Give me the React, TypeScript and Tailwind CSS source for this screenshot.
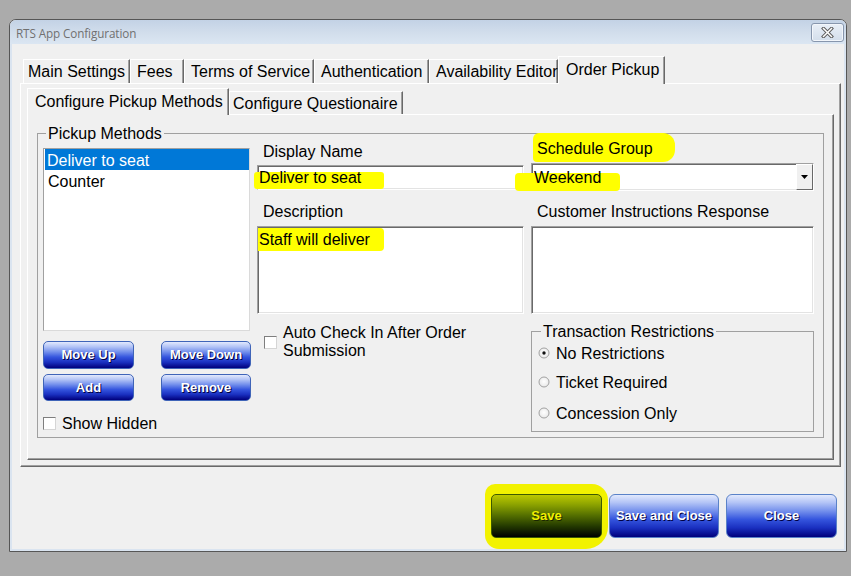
import React from "react";

const blueBtn =
  "flex items-center justify-center rounded-[5px] border border-[#3f64b8] bg-[linear-gradient(to_bottom,#e2e9fd_0%,#b3c4f6_18%,#7490ec_38%,#3555de_58%,#1a30c0_78%,#00007c_100%)] text-white font-bold text-[13px] [text-shadow:1px_1px_0_#000040]";

const sunken =
  "border border-t-[#a0a0a0] border-l-[#a0a0a0] border-r-[#ffffff] border-b-[#ffffff] shadow-[inset_1px_1px_0_#696969,inset_-1px_-1px_0_#e3e3e3] bg-white";

function Radio({ on }: { on?: boolean }) {
  return (
    <svg width="12" height="12" viewBox="0 0 12 12" className="shrink-0">
      <defs>
        <radialGradient id="rg" cx="50%" cy="45%" r="60%">
          <stop offset="0%" stopColor="#ffffff" />
          <stop offset="100%" stopColor="#e6e6e6" />
        </radialGradient>
      </defs>
      <circle cx="6" cy="6" r="5" fill="url(#rg)" stroke="#a2a2a2" strokeWidth="1" />
      {on && <circle cx="6" cy="6" r="1.7" fill="#111" />}
    </svg>
  );
}

function Check() {
  return (
    <div className="w-[13px] h-[13px] shrink-0 bg-white border border-[#7e7e7e] border-r-[#d5d5d5] border-b-[#d5d5d5]" />
  );
}

export default function App() {
  const outerTab =
    "h-[24px] shrink-0 border-t border-l border-white border-r border-r-[#696969] shadow-[inset_-1px_0_0_#a0a0a0] text-[16px] leading-[22px] pt-[1px] whitespace-nowrap";
  const label = "h-[18px] pl-[6px] pt-[1px] text-[16px] leading-[18px]";
  return (
    <div className="w-[851px] h-[576px] bg-[#ababab] pt-[19px] pl-[9px] font-['Liberation_Sans',Arial,sans-serif] text-black overflow-hidden">
      <div className="w-[838px] h-[533px] border border-[#565656] rounded-t-[7px] flex flex-col overflow-hidden bg-[#f0f0f0]">
        {/* Title bar */}
        <div className="h-[24px] shrink-0 flex items-start justify-between pl-[6px] pr-[2px] bg-[linear-gradient(to_bottom,#c3d2e5,#d2deec_55%,#dbe6f2)]">
          <span className="mt-[6px] text-[11.7px] leading-[14px] text-[#707070] font-['Open_Sans',sans-serif] tracking-[-0.1px]">
            RTS App Configuration
          </span>
          <div className="mt-[3px] w-[33px] h-[19px] rounded-[3px] border border-[#8796ad] bg-[linear-gradient(to_bottom,#e9eff7,#d3deeb)] flex items-center justify-center shadow-[inset_0_0_0_1px_#f2f6fb]">
            <svg width="13" height="11" viewBox="0 0 13 11">
              <path d="M2.5 1.5 L10.5 9.5 M10.5 1.5 L2.5 9.5" stroke="#5a5a5a" strokeWidth="3.4" strokeLinecap="square" />
              <path d="M2.5 1.5 L10.5 9.5 M10.5 1.5 L2.5 9.5" stroke="#ffffff" strokeWidth="1.5" strokeLinecap="square" />
            </svg>
          </div>
        </div>

        {/* Body */}
        <div className="flex-1 border-x-2 border-b-2 border-[#dae4f0] flex flex-col">
          {/* Outer tab control */}
          <div className="mt-[12px] ml-[8px] w-[821px] flex flex-col">
            <div className="h-[27px] flex items-end pl-[3px]">
              <div className={`${outerTab} w-[107px] pl-[4px]`}>Main Settings</div>
              <div className={`${outerTab} w-[54px] pl-[6px]`}>Fees</div>
              <div className={`${outerTab} w-[130px] pl-[6px]`}>Terms of Service</div>
              <div className={`${outerTab} w-[115px] pl-[6px]`}>Authentication</div>
              <div className={`${outerTab} w-[129px] pl-[6px]`}>Availability Editor</div>
              <div className="relative z-10 -mb-[1px] h-[28px] w-[107px] shrink-0 bg-[#f0f0f0] border-t border-l border-white border-r border-r-[#696969] shadow-[inset_-1px_0_0_#a0a0a0] pl-[7px] pt-[1px] text-[16px] leading-[24px] whitespace-nowrap">
                Order Pickup
              </div>
            </div>
            <div className="h-[384px] border-t border-l border-white border-r border-b border-r-[#696969] border-b-[#696969] shadow-[inset_-1px_-1px_0_#a0a0a0] pl-[6px] pt-[4px]">
              {/* Inner tab control */}
              <div className="w-[807px] flex flex-col">
                <div className="h-[26px] flex items-end">
                  <div className="relative z-10 -mb-[1px] h-[27px] w-[202px] shrink-0 bg-[#f0f0f0] border-t border-l border-white border-r border-r-[#696969] shadow-[inset_-1px_0_0_#a0a0a0] pl-[7px] pt-[1px] text-[16px] leading-[24px] whitespace-nowrap">
                    Configure Pickup Methods
                  </div>
                  <div className="h-[23px] w-[174px] shrink-0 border-t border-l border-white border-r border-r-[#696969] shadow-[inset_-1px_0_0_#a0a0a0] pl-[3px] pt-[1px] text-[16px] leading-[22px] whitespace-nowrap">
                    Configure Questionaire
                  </div>
                </div>
                <div className="h-[346px] border-t border-l border-white border-r border-b border-r-[#696969] border-b-[#696969] shadow-[inset_-1px_-1px_0_#a0a0a0] pl-[9px] pt-[9px]">
                  <fieldset className="w-[787px] h-[314px] border border-[#a0a0a0]">
                    <legend className="ml-[8px] px-[2px] text-[16px] leading-[18px]">
                      <span className="relative top-[1px]">Pickup Methods</span>
                    </legend>
                    <div className="flex items-start pl-[5px]">
                      {/* Left column */}
                      <div className="w-[208px] flex flex-col">
                        <div className="mt-[6px] w-[207px] h-[183px] bg-white border border-[#a0a0a0] border-r-[#dadada] border-b-[#dadada] pl-[1px] text-[16px]">
                          <div className="h-[21px] leading-[21px] pt-[1px] bg-[#0078d7] text-white pl-[2px]">Deliver to seat</div>
                          <div className="h-[21px] leading-[21px] pt-[1px] pl-[3px]">Counter</div>
                        </div>
                        <div className="mt-[10px] h-[28px] flex justify-between">
                          <div className={`${blueBtn} w-[91px]`}>Move Up</div>
                          <div className={`${blueBtn} w-[90px]`}>Move Down</div>
                        </div>
                        <div className="mt-[5px] h-[27px] flex justify-between">
                          <div className={`${blueBtn} w-[91px]`}>Add</div>
                          <div className={`${blueBtn} w-[90px]`}>Remove</div>
                        </div>
                        <div className="mt-[13px] h-[18px] flex items-center gap-[6px] text-[16px] leading-[18px]">
                          <Check />
                          <span className="relative top-[1px]">Show Hidden</span>
                        </div>
                      </div>

                      {/* Column A */}
                      <div className="ml-[6px] w-[267px] flex flex-col">
                        <div className={label}>Display Name</div>
                        <div className={`mt-[5px] h-[25px] relative ${sunken}`}>
                          <div className="absolute left-[-4px] top-[6px] w-[130px] h-[17px] bg-[#ffff00] rounded-[3px]" />
                          <span className="relative pl-[1px] text-[16px] leading-[21px]">Deliver to seat</span>
                        </div>
                        <div className={`mt-[12px] ${label}`}>Description</div>
                        <div className={`mt-[6px] h-[88px] relative ${sunken}`}>
                          <div className="absolute left-[0px] top-[1px] w-[126px] h-[23px] bg-[#ffff00] rounded-r-[4px]" />
                          <div className="relative pl-[1px] pt-[3px] text-[16px] leading-[20px]">Staff will deliver</div>
                        </div>
                        <div className="mt-[9px] flex items-start">
                          <div className="ml-[7px] mt-[13px]">
                            <Check />
                          </div>
                          <div className="ml-[6px] pt-[1px] text-[16px] leading-[18px]">
                            Auto Check In After Order
                            <br />
                            Submission
                          </div>
                        </div>
                      </div>

                      {/* Column B */}
                      <div className="ml-[7px] -mt-[3px] w-[283px] flex flex-col">
                        <div className={`relative ${label}`}>
                          <div className="absolute left-[2px] top-[-6px] w-[142px] h-[29px] bg-[#ffff00] rounded-[6px_12px_12px_4px]" />
                          <span className="relative">Schedule Group</span>
                        </div>
                        <div className={`mt-[6px] h-[28px] relative flex ${sunken}`}>
                          <div className="absolute left-[-17px] top-[9px] w-[105px] h-[18px] bg-[#ffff00] rounded-[4px]" />
                          <span className="relative flex-1 pl-[2px] text-[16px] leading-[27px]">Weekend</span>
                          <div className="w-[17px] h-full border border-t-white border-l-white border-r-[#696969] border-b-[#696969] bg-[#f0f0f0] flex items-center justify-center">
                            <svg width="7" height="4" viewBox="0 0 7 4">
                              <path d="M0 0 H7 L3.5 4 Z" fill="#000" />
                            </svg>
                          </div>
                        </div>
                        <div className={`mt-[11px] ${label}`}>Customer Instructions Response</div>
                        <div className={`mt-[6px] h-[88px] ${sunken}`} />
                        <fieldset className="mt-[8px] h-[110px] border border-[#a0a0a0]">
                          <legend className="ml-[9px] px-[2px] text-[16px] leading-[18px]">
                            <span className="relative top-[1px]">Transaction Restrictions</span>
                          </legend>
                          <div className="flex flex-col pl-[6px] text-[16px] leading-[18px]">
                            <div className="mt-[4px] flex items-center gap-[6px]">
                              <Radio on />
                              <span className="relative top-[1px]">No Restrictions</span>
                            </div>
                            <div className="mt-[11px] flex items-center gap-[6px]">
                              <Radio />
                              <span className="relative top-[1px]">Ticket Required</span>
                            </div>
                            <div className="mt-[13px] flex items-center gap-[6px]">
                              <Radio />
                              <span className="relative top-[1px]">Concession Only</span>
                            </div>
                          </div>
                        </fieldset>
                      </div>
                    </div>
                  </fieldset>
                </div>
              </div>
            </div>
          </div>

          {/* Bottom buttons */}
          <div className="mt-[27px] flex justify-end gap-[7px] pr-[7px]">
            <div className="relative w-[111px] h-[44px]">
              <div className="absolute left-[-6px] top-[-10px] w-[123px] h-[65px] bg-[#f2f200] rounded-[10px_16px_22px_14px]" />
              <div className="relative w-full h-full flex items-center justify-center rounded-[5px] border border-[#3d5a00] bg-[linear-gradient(to_bottom,#bcc800_0%,#8ea400_22%,#557000_48%,#243a00_74%,#000000_100%)] text-[#f0f000] font-bold text-[13px] [text-shadow:1px_1px_0_#1a2600]">
                Save
              </div>
            </div>
            <div className={`${blueBtn} w-[110px] h-[44px] rounded-[6px] border-[#5a82c8]`}>Save and Close</div>
            <div className={`${blueBtn} w-[111px] h-[44px] rounded-[6px] border-[#5a82c8]`}>Close</div>
          </div>
        </div>
      </div>
    </div>
  );
}
